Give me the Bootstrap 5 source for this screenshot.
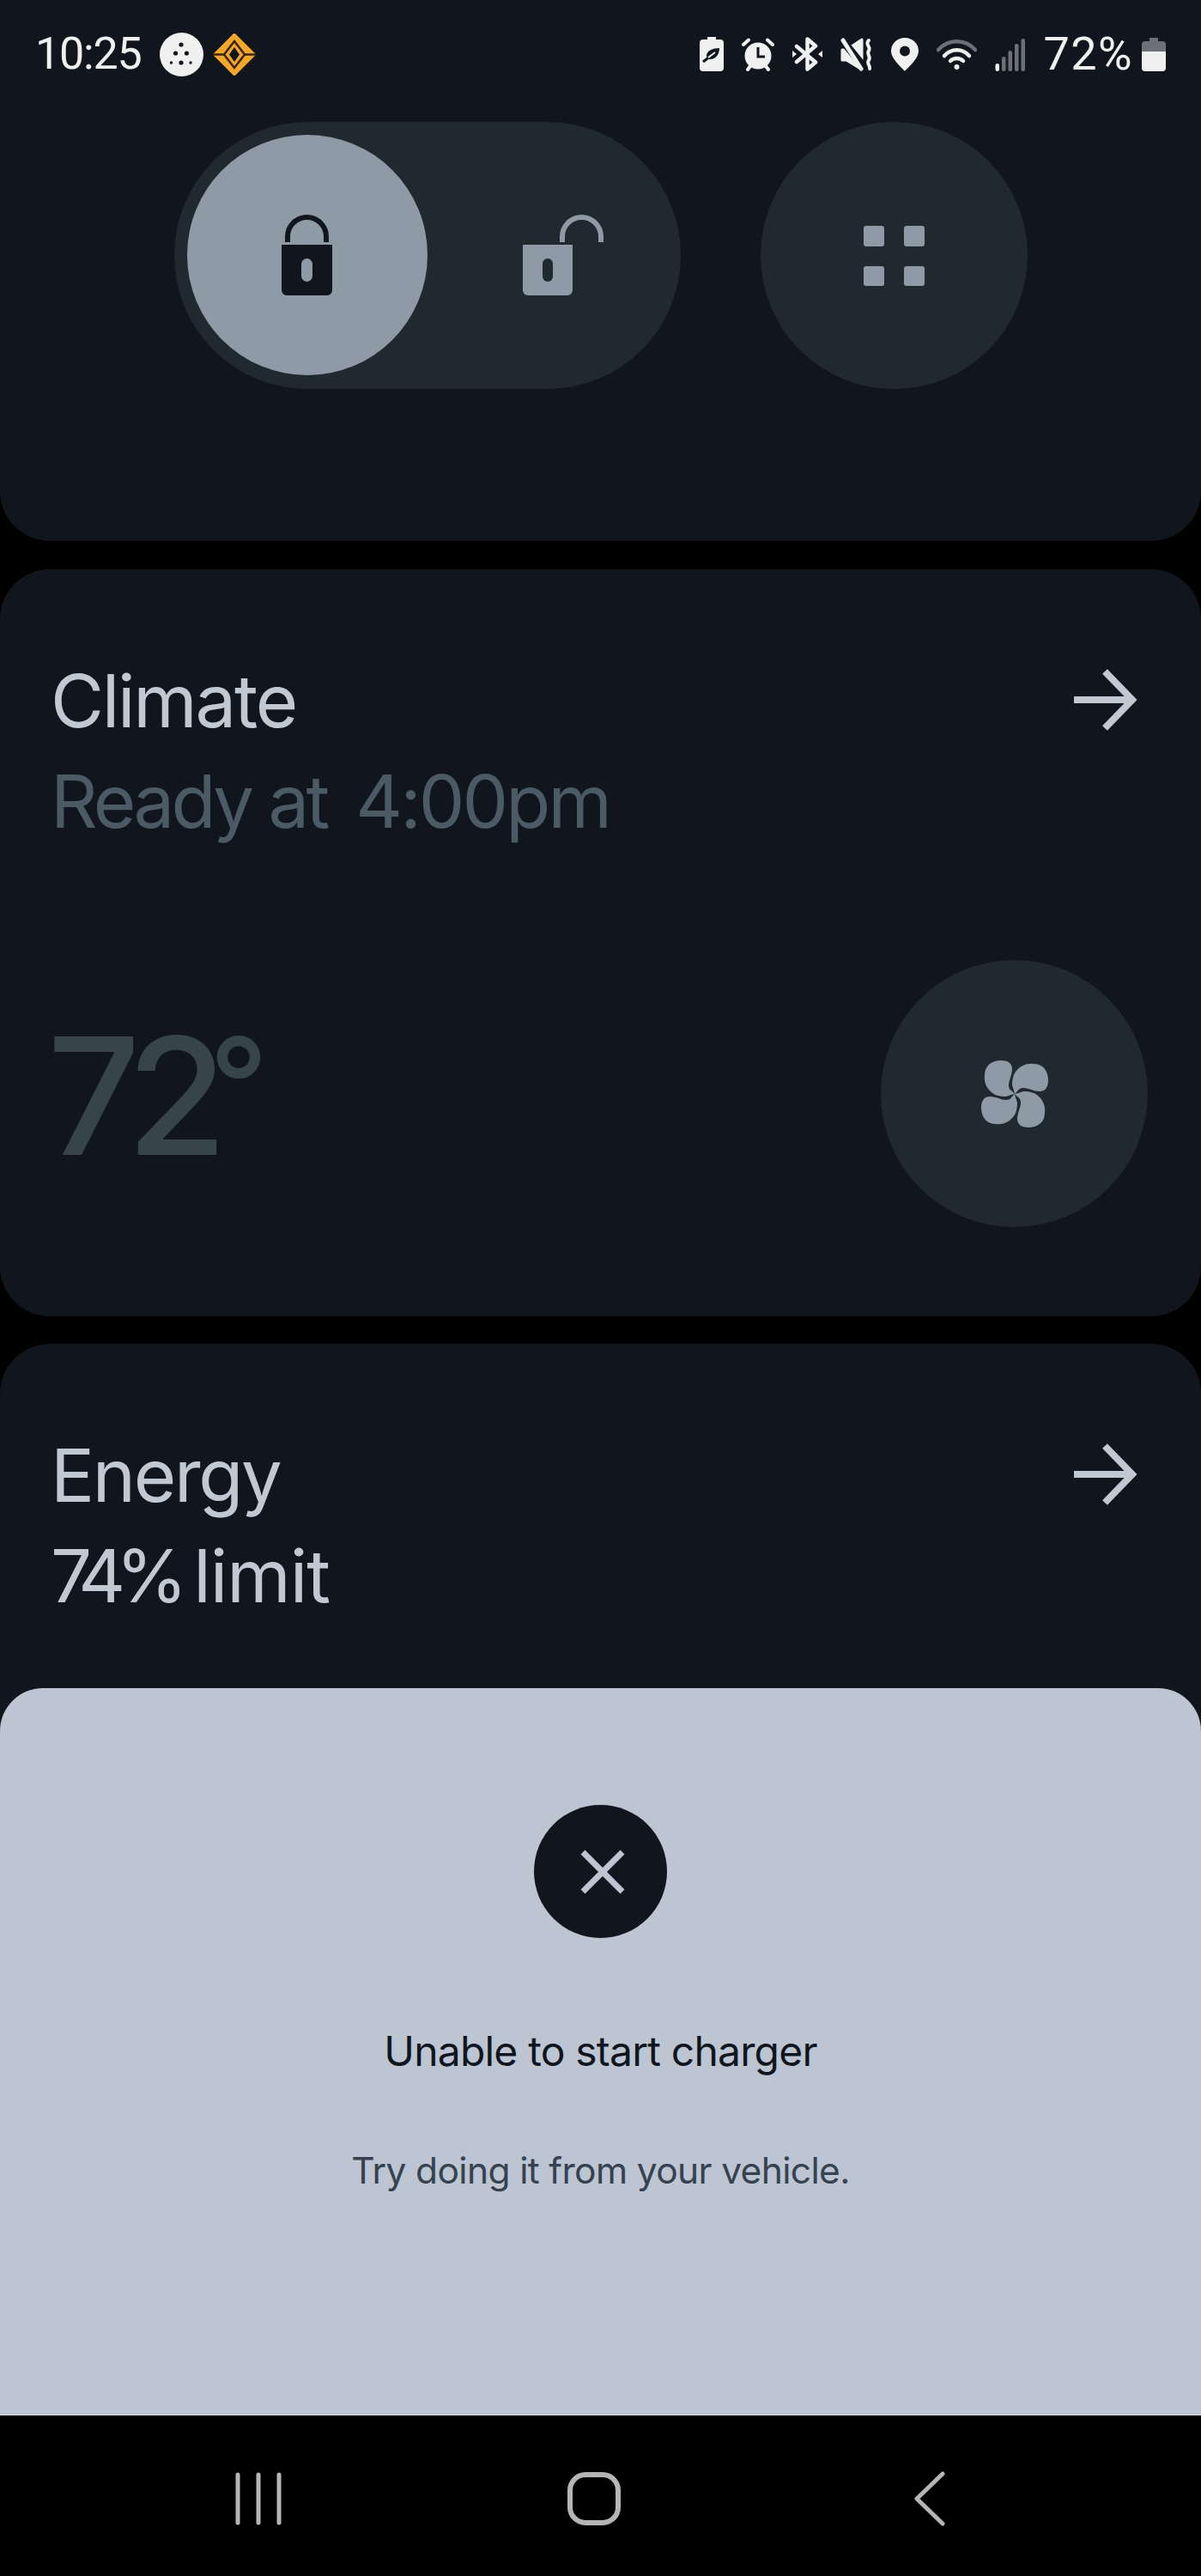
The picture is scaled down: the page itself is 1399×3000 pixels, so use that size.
<!DOCTYPE html>
<html lang="en">
<head>
<meta charset="utf-8">
<title>Vehicle</title>
<link href="https://cdn.jsdelivr.net/npm/bootstrap@5.3.0/dist/css/bootstrap.min.css" rel="stylesheet">
<style>
html,body{margin:0;background:#000;}
body{font-family:"Inter","Liberation Sans",sans-serif;}
.phone{width:1399px;height:3000px;overflow:hidden;background:#000;}
.screen{height:2813px;}
.panel{background:#11161e;border:0;border-radius:58px;color:#bfc8d3;}
.panel-top{height:630px;border-radius:0 0 58px 58px;flex:none;}
.panel-climate{height:870px;margin-top:33px;flex:none;}
.panel-energy{margin-top:32px;flex:1 1 auto;border-radius:58px 58px 0 0;}
.status-row{height:126px;padding:0 41px 0 41px;color:#f0f0f0;font-family:"Roboto","Liberation Sans",sans-serif;font-weight:400;font-size:52px;line-height:1;}
.status-left{column-gap:21px;}
.status-time{letter-spacing:-1.2px;}
.status-right{column-gap:21px;}
.batt-pct{margin-right:-11px;font-size:54px;letter-spacing:1.4px;}
.logo-mark{margin-left:-10px;}
.controls{margin-top:16px;column-gap:93px;}
.lock-pill{width:590px;height:311px;padding:15px;background:#202930;border-radius:156px;}
.lock-slot{width:280px;height:280px;flex:none;}
.lock-on{background:#8e9aa6;}
.round-btn{width:311px;height:311px;background:#202830;flex:none;}
.panel-body{padding:95px 62px 0 59px;}
.title-text{font-size:85px;line-height:117px;letter-spacing:-2.3px;color:#bfc8d3;}
.sub-muted{color:#4c5a65;}
.ready-words{letter-spacing:-3.7px;}
.ready-time{letter-spacing:-2.9px;margin-left:12px;}
.limit-pct{letter-spacing:-11px;margin-right:-4px;}
.limit-word{letter-spacing:-1px;}
.temp-row{margin-top:126px;}
.temp-text{font-size:190px;line-height:190px;font-weight:500;letter-spacing:-16px;color:#38444c;margin:5px 0 0 -4px;}
.temp-deg{font-size:150px;line-height:0;vertical-align:29px;letter-spacing:0;margin-left:-5px;}
.arrow-ico{margin-right:12px;margin-top:-4px;}
.sheet{left:0;right:0;top:1966px;bottom:0;background:#bcc5d1;border-radius:50px 50px 0 0;padding-top:136px;border-bottom:1px solid #d9dee5;}
.close-disc{width:155px;height:155px;background:#11161e;}
.close-glyph{margin-left:5px;}
.sheet-title{font-size:48px;line-height:58px;color:#10161f;margin:103px 0 0;font-weight:400;letter-spacing:-.8px;}
.sheet-text{font-size:42.5px;line-height:52px;color:#36424f;margin:84px 0 0;letter-spacing:-.65px;}
.nav-bar-android{height:187px;background:#000;padding-left:105px;}
.nav-cell{width:391px;height:187px;padding-top:7px;}
</style>
</head>
<body>
<div class="phone d-flex flex-column">
  <div class="screen position-relative d-flex flex-column">

    <section class="card panel panel-top">
      <div class="status-row d-flex align-items-center justify-content-between">
        <div class="status-left d-flex align-items-center">
          <span class="status-time">10:25</span>
          <svg width="51" height="51" viewBox="0 0 51 51"><circle cx="25.5" cy="25.5" r="25.5" fill="#f0f0f0"/><g fill="#11161e"><circle cx="25" cy="14" r="2.6"/><circle cx="18.5" cy="24" r="2.6"/><circle cx="31.4" cy="24" r="2.6"/><circle cx="25" cy="35" r="2.6"/><circle cx="13.5" cy="35" r="1.7"/><circle cx="36" cy="35" r="1.7"/></g></svg>
          <svg class="logo-mark" width="50" height="49" viewBox="0 0 50 49"><path d="M25 2 47.5 24.5 25 47 2.500 24.500Z" fill="#f2a72a" stroke="#f2a72a" stroke-width="4" stroke-linejoin="round"/><path d="M25 9 37 24.500 25 40 13 24.500Z" fill="#f2a72a" stroke="#3a2510" stroke-width="2.500"/><path d="M0 24.500H13M37 24.500H50" stroke="#3a2510" stroke-width="2.500"/><path d="M25 16 31 24.500 25 33 19 24.500Z" fill="#11161e"/></svg>
        </div>
        <div class="status-right d-flex align-items-center">
          <svg width="28" height="40" viewBox="0 0 28 40"><path d="M9 0h10v3h5a4 4 0 0 1 4 4v29a4 4 0 0 1-4 4H4a4 4 0 0 1-4-4V7a4 4 0 0 1 4-4h5Z" fill="#f0f0f0"/><path d="M23 13C15 13 9 16 8 21c0 3 1 5 4 5 7 0 11-6 11-13Z" fill="#11161e"/><path d="M4 29 17 19" stroke="#11161e" stroke-width="3"/><path d="M10 24 18 18" stroke="#f0f0f0" stroke-width="2"/></svg>
          <svg width="38" height="39" viewBox="0 0 38 39"><circle cx="19" cy="21" r="15.500" fill="#f0f0f0"/><path d="M2 8 8 2.500M36 8 30 2.500M7 37l3-4M31 37l-3-4" stroke="#f0f0f0" stroke-width="4" stroke-linecap="round"/><path d="M19 11v11h8" fill="none" stroke="#11161e" stroke-width="3"/></svg>
          <svg width="35" height="40" viewBox="0 0 35 40"><path d="M5 11 27 29.500 17.500 37.500V2.500L27 10.500 5 29" fill="none" stroke="#f0f0f0" stroke-width="4.500" stroke-linejoin="round" stroke-linecap="round"/><path d="M0 16 5 20 0 24ZM35 16 30 20 35 24Z" fill="#f0f0f0"/></svg>
          <svg width="38" height="39" viewBox="0 0 38 39"><path d="M2 14H7L25 2V37L7 26H2Z" fill="#f0f0f0" stroke="#f0f0f0" stroke-width="3" stroke-linejoin="round"/><path d="M-2 -2 30 37" stroke="#11161e" stroke-width="9"/><path d="M3 3 24 36" stroke="#f0f0f0" stroke-width="5" stroke-linecap="round"/><path d="M33 3C28 8 36 10 33 15 30 19 36 22 33 26 30 30 35 32 34 36" fill="none" stroke="#f0f0f0" stroke-width="4" stroke-linecap="round"/></svg>
          <svg width="32" height="39" viewBox="0 0 32 39"><path d="M16 39C14 36 0 25 0 15.500A16 15.500 0 0 1 32 15.500C32 25 18 36 16 39Z" fill="#f0f0f0"/><circle cx="16" cy="15.500" r="6" fill="#11161e"/></svg>
          <svg width="47" height="36" viewBox="0 0 47 36"><path d="M2 13C14 0 33 0 45 13" fill="none" stroke="#6d7177" stroke-width="4.500" stroke-linecap="round"/><path d="M9 20C17 11 30 11 38 20" fill="none" stroke="#f0f0f0" stroke-width="4.500" stroke-linecap="round"/><path d="M16 26C20 22 27 22 31 26" fill="none" stroke="#f0f0f0" stroke-width="4.500" stroke-linecap="round"/><circle cx="23.500" cy="33" r="3" fill="#f0f0f0"/></svg>
          <svg width="36" height="39" viewBox="0 0 36 39"><rect x=".5" y="30" width="4.500" height="9" rx="2.200" fill="#f0f0f0"/><g fill="#6d7177"><rect x="8" y="22" width="4.500" height="17" rx="2.200"/><rect x="15.500" y="15" width="4.500" height="24" rx="2.200"/><rect x="23" y="7" width="4.500" height="32" rx="2.200"/><rect x="30.500" y="1" width="4.500" height="38" rx="2.200"/></g></svg>
          <span class="batt-pct">72%</span>
          <svg width="28" height="39" viewBox="0 0 28 39"><path d="M9 0h10v4h5a4 4 0 0 1 4 4v8H0V8a4 4 0 0 1 4-4h5Z" fill="#6d7177"/><path d="M0 16h28v19a4 4 0 0 1-4 4H4a4 4 0 0 1-4-4Z" fill="#f0f0f0"/></svg>
        </div>
      </div>
      <div class="controls d-flex justify-content-center">
        <div class="lock-pill d-flex">
          <div class="lock-slot lock-on rounded-circle d-flex align-items-center justify-content-center">
            <svg width="60" height="94" viewBox="0 0 60 94"><path d="M7 32V25.500a22.500 22.500 0 0 1 45 0V32" fill="none" stroke="#11161e" stroke-width="6"/><path d="M0 35H59V88a6 6 0 0 1-6 6H6a6 6 0 0 1-6-6Z" fill="#11161e"/><rect x="23" y="51" width="13" height="27" rx="6.500" fill="#8e9aa6"/></svg>
          </div>
          <div class="lock-slot d-flex align-items-center justify-content-center">
            <svg width="130" height="94" viewBox="0 0 130 94"><path d="M82 32V25.500a22.500 22.500 0 0 1 45 0V32" fill="none" stroke="#8e9aa6" stroke-width="6"/><path d="M36 35H94V88a6 6 0 0 1-6 6H42a6 6 0 0 1-6-6Z" fill="#8e9aa6"/><rect x="59" y="51" width="12" height="27" rx="6" fill="#202930"/></svg>
          </div>
        </div>
        <div class="round-btn rounded-circle d-flex align-items-center justify-content-center">
          <svg width="71" height="70" viewBox="0 0 71 70"><g fill="#8e9aa6"><rect width="24" height="24" rx="3"/><rect x="47" width="24" height="24" rx="3"/><rect y="47" width="24" height="23" rx="3"/><rect x="47" y="47" width="24" height="23" rx="3"/></g></svg>
        </div>
      </div>
    </section>

    <section class="card panel panel-climate">
      <div class="panel-body">
        <div class="d-flex justify-content-between align-items-center">
          <div class="title-text">Climate</div>
          <svg class="arrow-ico" width="74" height="72" viewBox="0 0 74 72"><path d="M0 36H68M36 3 68 36 36 69" fill="none" stroke="#bfc8d3" stroke-width="8"/></svg>
        </div>
        <div class="title-text sub-muted"><span class="ready-words">Ready at</span> <span class="ready-time">4:00pm</span></div>
        <div class="temp-row d-flex justify-content-between align-items-center">
          <div class="temp-text">72<span class="temp-deg">°</span></div>
          <div class="round-btn rounded-circle d-flex align-items-center justify-content-center">
            <svg width="80" height="80" viewBox="-40 -40 80 80"><defs><path id="fanblade" d="M-1-4-3-10C-3-18-1-24 2-27 7-33 14-36 22-35 32-35 39-28 39-16 39-7 35-3 29-3 22-3 16-7 10-7 7-7 5-6 3-3L0 0Z"/></defs><g fill="#8e9aa6"><use href="#fanblade"/><use href="#fanblade" transform="rotate(90)"/><use href="#fanblade" transform="rotate(180)"/><use href="#fanblade" transform="rotate(270)"/></g></svg>
          </div>
        </div>
      </div>
    </section>

    <section class="card panel panel-energy">
      <div class="panel-body">
        <div class="d-flex justify-content-between align-items-center">
          <div class="title-text">Energy</div>
          <svg class="arrow-ico" width="74" height="72" viewBox="0 0 74 72"><path d="M0 36H68M36 3 68 36 36 69" fill="none" stroke="#bfc8d3" stroke-width="8"/></svg>
        </div>
        <div class="title-text"><span class="limit-pct">74%</span> <span class="limit-word">limit</span></div>
      </div>
    </section>

    <aside class="sheet position-absolute d-flex flex-column align-items-center text-center">
      <div class="close-disc rounded-circle d-flex align-items-center justify-content-center">
        <svg class="close-glyph" width="52" height="52" viewBox="0 0 52 52"><path d="M3 3 49 49M49 3 3 49" stroke="#bcc5d1" stroke-width="7"/></svg>
      </div>
      <h2 class="sheet-title">Unable to start charger</h2>
      <p class="sheet-text">Try doing it from your vehicle.</p>
    </aside>
  </div>

  <nav class="nav-bar-android d-flex">
    <div class="nav-cell d-flex align-items-center justify-content-center">
      <svg width="54" height="62" viewBox="0 0 54 62"><path d="M3 3V59M27 3V59M51 3V59" stroke="#b5b5b5" stroke-width="5" stroke-linecap="round"/></svg>
    </div>
    <div class="nav-cell d-flex align-items-center justify-content-center">
      <svg width="62" height="62" viewBox="0 0 62 62"><rect x="3" y="3" width="56" height="56" rx="18" fill="none" stroke="#b5b5b5" stroke-width="6"/></svg>
    </div>
    <div class="nav-cell d-flex align-items-center justify-content-center">
      <svg width="36" height="64" viewBox="0 0 36 64"><path d="M33 3 3 32 33 61" fill="none" stroke="#b5b5b5" stroke-width="5" stroke-linecap="round" stroke-linejoin="round"/></svg>
    </div>
  </nav>
</div>
<script src="https://cdn.jsdelivr.net/npm/bootstrap@5.3.0/dist/js/bootstrap.bundle.min.js"></script>
</body>
</html>
